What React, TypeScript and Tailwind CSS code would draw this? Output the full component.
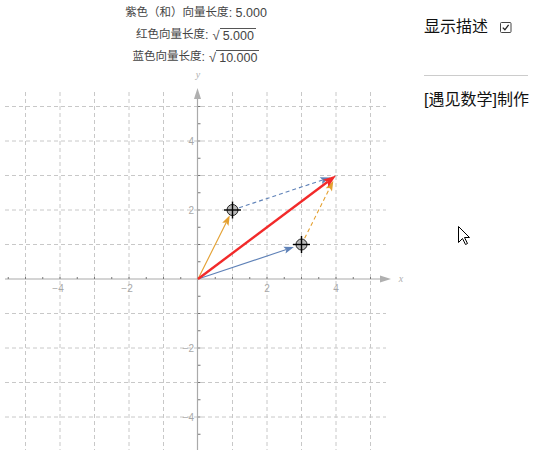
import React from "react";

const U = 34.5;
const OX = 198;
const OY = 211;
const X = (v: number) => OX + U * v;
const Y = (v: number) => OY - U * v;

type ArrowProps = {
  x1: number; y1: number; x2: number; y2: number;
  color: string; w: number; hl: number; hw: number; dash?: string;
};

function Arrow({ x1, y1, x2, y2, color, w, hl, hw, dash }: ArrowProps) {
  const dx = x2 - x1, dy = y2 - y1;
  const L = Math.hypot(dx, dy);
  const ux = dx / L, uy = dy / L;
  const bx = x2 - ux * hl, by = y2 - uy * hl;
  const px = -uy, py = ux;
  const nx = x2 - ux * hl * 0.8, ny = y2 - uy * hl * 0.8;
  return (
    <g>
      <line x1={x1} y1={y1} x2={nx} y2={ny} stroke={color} strokeWidth={w} strokeDasharray={dash} />
      <polygon
        points={`${x2},${y2} ${bx + px * hw},${by + py * hw} ${nx},${ny} ${bx - px * hw},${by - py * hw}`}
        fill={color}
      />
    </g>
  );
}

function short(x1: number, y1: number, x2: number, y2: number, d: number) {
  const L = Math.hypot(x2 - x1, y2 - y1);
  const t = (L - d) / L;
  return { x: x1 + (x2 - x1) * t, y: y1 + (y2 - y1) * t };
}

function Pt({ x, y }: { x: number; y: number }) {
  return (
    <g>
      <circle cx={x} cy={y} r={5.5} fill="#b8b8b8" stroke="#222" strokeWidth={1} />
      <line x1={x - 8.5} y1={y} x2={x + 8.5} y2={y} stroke="#000" strokeWidth={1.4} />
      <line x1={x} y1={y - 8.5} x2={x} y2={y + 8.5} stroke="#000" strokeWidth={1.4} />
    </g>
  );
}

function Graph() {
  const grid = [-5, -4, -3, -2, -1, 1, 2, 3, 4, 5];
  const halves: number[] = [];
  for (let k = -11; k <= 10; k++) if (k !== 0) halves.push(k / 2);
  const yHalves: number[] = [];
  for (let k = -11; k <= 10; k++) if (k !== 0) yHalves.push(k / 2);

  const orange = "#e4a030";
  const blue = "#5f82b8";
  const red = "#f22a2a";

  const o = { x: X(0), y: Y(0) };
  const pA = { x: X(1), y: Y(2) };
  const pB = { x: X(3), y: Y(1) };
  const pS = { x: X(4), y: Y(3) };
  const oTip = short(o.x, o.y, pA.x, pA.y, 6);
  const bTip = short(o.x, o.y, pB.x, pB.y, 8);
  const dbTip = short(pA.x, pA.y, pS.x, pS.y, 6);
  const doTip = short(pB.x, pB.y, pS.x, pS.y, 6);

  return (
    <svg width={410} height={382} viewBox="0 0 410 382" className="block">
      {grid.map((i) => (
        <line key={"v" + i} x1={X(i)} y1={24} x2={X(i)} y2={382} stroke="#c8c8c8" strokeWidth={1} strokeDasharray="4 3" />
      ))}
      {grid.map((j) => (
        <line key={"h" + j} x1={5} y1={Y(j)} x2={386} y2={Y(j)} stroke="#c8c8c8" strokeWidth={1} strokeDasharray="4 3" />
      ))}
      {/* axes */}
      <line x1={5} y1={OY} x2={382} y2={OY} stroke="#aaaaaa" strokeWidth={1.2} />
      <polygon points={`391,${OY} 380,${OY - 3.5} 380,${OY + 3.5}`} fill="#b0b0b0" />
      <line x1={OX - 0.5} y1={29} x2={OX - 0.5} y2={382} stroke="#aaaaaa" strokeWidth={1.2} />
      <polygon points={`${OX - 0.5},20 ${OX - 4},31 ${OX + 3},31`} fill="#b0b0b0" />
      {halves.map((h) => (
        <line key={"tx" + h} x1={X(h)} y1={OY} x2={X(h)} y2={OY - 2} stroke="#777" strokeWidth={1} />
      ))}
      {yHalves.map((h) => (
        <line key={"ty" + h} x1={OX} y1={Y(h)} x2={OX + 2.5} y2={Y(h)} stroke="#777" strokeWidth={1} />
      ))}
      {[-4, -2, 2, 4].map((v) => (
        <text key={"lx" + v} x={X(v) - (v < 0 ? 2 : 0)} y={OY + 13} fontSize={10} fill="#a8a8a8" textAnchor="middle" fontFamily="Liberation Sans, sans-serif">
          {v < 0 ? "\u2212" + -v : v}
        </text>
      ))}
      {[-4, -2, 2, 4].map((v) => (
        <text key={"ly" + v} x={194} y={Y(v) + 3.5} fontSize={10} fill="#a8a8a8" textAnchor="end" fontFamily="Liberation Sans, sans-serif">
          {v < 0 ? "\u2212" + -v : v}
        </text>
      ))}
      <text x={401} y={OY + 3} fontSize={10} fill="#b0b0b0" fontStyle="italic" textAnchor="middle" fontFamily="Liberation Serif, serif">x</text>
      <text x={OX} y={10} fontSize={10} fill="#b0b0b0" fontStyle="italic" textAnchor="middle" fontFamily="Liberation Serif, serif">y</text>

      {/* vectors */}
      <Arrow x1={pA.x} y1={pA.y} x2={dbTip.x} y2={dbTip.y} color={blue} w={1.1} hl={10} hw={3.5} dash="4 3" />
      <Arrow x1={pB.x} y1={pB.y} x2={doTip.x} y2={doTip.y} color={orange} w={1.1} hl={10} hw={3.5} dash="4 3" />
      <Arrow x1={o.x} y1={o.y} x2={oTip.x} y2={oTip.y} color={orange} w={1.1} hl={10} hw={3.5} />
      <Arrow x1={o.x} y1={o.y} x2={bTip.x} y2={bTip.y} color={blue} w={1.1} hl={10} hw={3.5} />
      <Arrow x1={o.x} y1={o.y} x2={pS.x} y2={pS.y} color={red} w={2.4} hl={13} hw={4.5} />
      <Pt x={pA.x} y={pA.y} />
      <Pt x={pB.x} y={pB.y} />
    </svg>
  );
}

function Sqrt({ v }: { v: string }) {
  return (
    <span className="inline-flex items-start ml-[4px]">
      <span className="leading-[15px] text-[13px]">√</span>
      <span className="border-t border-[#555] leading-[13px] pt-[1px] pl-[3px] pr-[2px]">{v}</span>
    </span>
  );
}

export default function App() {
  const cjk = { fontFamily: '"Liberation Sans", "Noto Sans CJK SC", sans-serif' };
  return (
    <div className="relative w-[538px] h-[450px] bg-white overflow-hidden flex" style={cjk}>
      <div className="w-[410px] flex flex-col">
        <div className="h-[68px] w-[392px] pt-[2px] flex flex-col items-center text-[12.5px] text-[#444]">
          <div className="h-[23px] flex items-center">
            <span className="text-[11.5px]">紫色（和）向量长度</span>
            <span>: 5.000</span>
          </div>
          <div className="h-[23px] flex items-center">
            <span className="text-[11.5px]">红色向量长度</span>
            <span>:</span>
            <Sqrt v="5.000" />
          </div>
          <div className="h-[23px] flex items-center">
            <span className="text-[11.5px]">蓝色向量长度</span>
            <span>:</span>
            <Sqrt v="10.000" />
          </div>
        </div>
        <Graph />
      </div>
      <div className="ml-[14px] w-[104px] pt-[15px] text-[16px] text-[#111]">
        <div className="h-[24px] flex items-center">
          <span className="leading-[24px]">显示描述</span>
          <svg width={12} height={11} viewBox="0 0 12 11" className="ml-[12px]">
            <rect x={0.5} y={0.5} width={10.5} height={10} rx={1} fill="#fff" stroke="#444" strokeWidth={1} />
            <path d="M2.8 5.6 L4.9 7.8 L8.6 2.8" fill="none" stroke="#222" strokeWidth={1.3} />
          </svg>
        </div>
        <div className="mt-[36px] border-t border-[#cccccc]" />
        <div className="mt-[12px] leading-[24px] whitespace-nowrap">[遇见数学]制作</div>
      </div>
      <svg width={13} height={20} viewBox="0 0 13 20" className="absolute left-[458px] top-[226px]">
        <path d="M0.5 0.5 L0.5 16.5 L4.5 12.5 L7.5 18.5 L9.5 17.5 L6.5 11.5 L11.5 11.5 Z" fill="#fff" stroke="#000" strokeWidth={1} />
      </svg>
    </div>
  );
}
